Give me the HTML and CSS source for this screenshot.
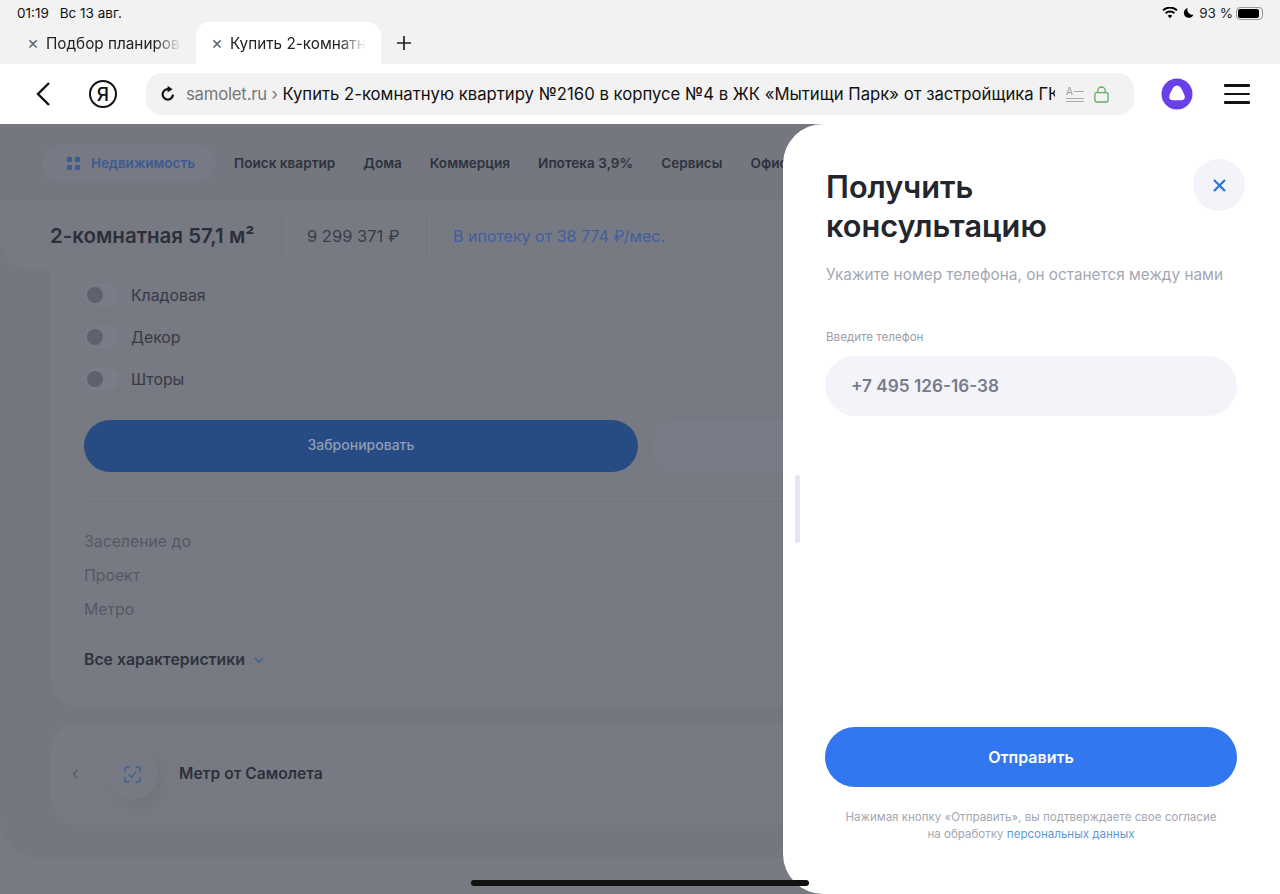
FILE: index.html
```html
<!DOCTYPE html>
<html lang="ru">
<head>
  <meta charset="UTF-8">
  <meta name="viewport" content="width=device-width, initial-scale=1.0">
  <title>Купить 2-комнатную квартиру</title>
  <link rel="stylesheet" href="styles.css">
</head>
<body>
  <div class="app">
    <div class="chrome-top">
      <div class="status-bar">
        <div class="status-time">
          <span>01:19</span>
          <span>Вс 13 авг.</span>
        </div>
        <div class="status-right">
          <svg class="status-wifi" viewBox="0 0 16 12" width="16" height="12">
            <path d="M8 11.200 10.200 8.800a3.200 3.200 0 0 0-4.400 0z" fill="#000"/>
            <path d="M3.600 6.200a6.400 6.400 0 0 1 8.800 0M1 3.400a10 10 0 0 1 14 0" fill="none" stroke="#000" stroke-width="1.900"/>
          </svg>
          <svg class="status-moon" viewBox="0 0 12 12" width="11" height="12">
            <path d="M5 .6a5.400 5.400 0 1 0 6.400 7.200A5.600 5.600 0 0 1 5 .6z" fill="#000"/>
          </svg>
          <span>93 %</span>
          <div class="battery"><div class="battery-level"></div></div>
        </div>
      </div>
      <div class="tabs">
        <div class="tab">
          <span class="tab-close">×</span>
          <span class="tab-title">Подбор планировок</span>
        </div>
        <div class="tab active">
          <span class="tab-close">×</span>
          <span class="tab-title">Купить 2-комнатную</span>
        </div>
        <div class="tab-add">
          <svg viewBox="0 0 14 14" width="14" height="14">
            <path d="M7 0v14M0 7h14" stroke="#222" stroke-width="1.700"/>
          </svg>
        </div>
      </div>
    </div>

    <div class="toolbar">
      <svg class="back-icon" viewBox="0 0 16 26" width="16" height="26">
        <path d="M14 2 3 13l11 11" fill="none" stroke="#111" stroke-width="2.400"/>
      </svg>
      <div class="ya-logo">Я</div>
      <div class="url-bar">
        <svg class="reload-icon" viewBox="0 0 18 18" width="18" height="18">
          <path d="M14 9.600A5.200 5.200 0 1 1 9.200 4.200" fill="none" stroke="#111" stroke-width="2.200"/>
          <path d="M8.600 .8l5 3.400-5 3.400z" fill="#111"/>
        </svg>
        <div class="url-text"><span class="url-host">samolet.ru ›</span> Купить 2-комнатную квартиру №2160 в корпусе №4 в ЖК «Мытищи Парк» от застройщика ГК Самолет</div>
        <div class="reader-icon">
          <span class="reader-top"><span>A</span><i></i></span>
          <i></i>
          <i></i>
        </div>
        <svg class="lock-icon" viewBox="0 0 16 18" width="15" height="17">
          <rect x="1" y="7" width="14" height="10" rx="1.500" fill="none" stroke="#62ad62" stroke-width="1.400"/>
          <path d="M4 7V5a4 4 0 0 1 8 0v2" fill="none" stroke="#62ad62" stroke-width="1.400"/>
        </svg>
      </div>
      <svg class="alice-icon" viewBox="0 0 32 32" width="32" height="32">
        <circle cx="16" cy="16" r="15.500" fill="#6a3fe8"/>
        <path d="M16 7.500c2.600 0 4 2.200 5.600 5.600 1.400 3 3 5.400 1.800 7.600-1.200 2-4.400 1.500-7.400 1.500s-6.200.5-7.400-1.500c-1.200-2.200.4-4.600 1.800-7.600C12 9.700 13.400 7.500 16 7.500z" fill="#fff"/>
      </svg>
      <div class="menu-icon"><i></i><i></i><i></i></div>
    </div>

    <div class="page">
      <div class="site">
        <div class="site-nav">
          <div class="nav-pill">
            <span class="nav-grid"><i></i><i></i><i></i><i></i></span>
            Недвижимость
          </div>
          <span class="nav-link">Поиск квартир</span>
          <span class="nav-link">Дома</span>
          <span class="nav-link">Коммерция</span>
          <span class="nav-link">Ипотека 3,9%</span>
          <span class="nav-link">Сервисы</span>
          <span class="nav-link">Офисы</span>
        </div>

        <div class="price-bar">
          <div class="price-title">2-комнатная 57,1 м²</div>
          <div class="price-value">9 299 371 ₽</div>
          <div class="price-mortgage">В ипотеку от 38 774 ₽/мес.</div>
        </div>

        <div class="card main-card">
          <div class="option"><span class="toggle"></span>Кладовая</div>
          <div class="option"><span class="toggle"></span>Декор</div>
          <div class="option"><span class="toggle"></span>Шторы</div>
          <div class="card-actions">
            <div class="book-btn">Забронировать</div>
            <div class="second-btn"></div>
          </div>
          <div class="specs">
            <div class="spec">Заселение до</div>
            <div class="spec">Проект</div>
            <div class="spec">Метро</div>
          </div>
          <div class="all-specs">
            Все характеристики
            <svg viewBox="0 0 10 6" width="10" height="6">
              <path d="M1 1l4 4 4-4" fill="none" stroke="#3d5c97" stroke-width="1.400"/>
            </svg>
          </div>
        </div>

        <div class="card promo-card">
          <svg class="promo-prev" viewBox="0 0 7 12" width="7" height="10">
            <path d="M6 1 1 6l5 5" fill="none" stroke="#565a66" stroke-width="1.500"/>
          </svg>
          <div class="promo-icon">
            <svg viewBox="0 0 18 18" width="17" height="17">
              <path d="M1 6V3a2 2 0 0 1 2-2h3M12 1h3a2 2 0 0 1 2 2v3M17 12v3a2 2 0 0 1-2 2h-3M6 17H3a2 2 0 0 1-2-2v-3" fill="none" stroke="#3f5f9c" stroke-width="1.700"/>
              <path d="M5 9l3 3 5-6" fill="none" stroke="#3f5f9c" stroke-width="1.500"/>
            </svg>
          </div>
          <div class="promo-title">Метр от Самолета</div>
        </div>
      </div>

      <div class="drawer">
        <div class="drawer-scroll"></div>
        <div class="drawer-head">
          <h1 class="drawer-title">Получить консультацию</h1>
          <div class="drawer-close">
            <svg viewBox="0 0 13 13" width="13" height="13">
              <path d="M1 1l11 11M12 1 1 12" stroke="#2f6fe0" stroke-width="2.200"/>
            </svg>
          </div>
        </div>
        <div class="drawer-sub">Укажите номер телефона, он останется между нами</div>
        <div class="field-label">Введите телефон</div>
        <div class="field-input">+7 495 126-16-38</div>
        <div class="drawer-foot">
          <div class="send-btn">Отправить</div>
          <div class="legal">
            Нажимая кнопку «Отправить», вы подтверждаете свое согласие<br>
            на обработку <span class="legal-link">персональных данных</span>
          </div>
        </div>
      </div>

      <div class="home-bar"></div>
    </div>
  </div>
</body>
</html>
```

FILE: styles.css
```css
* {
  box-sizing: border-box;
}

html, body {
  margin: 0;
  padding: 0;
  height: 100%;
}

body {
  font-family: Inter, 'Noto Sans', sans-serif;
  background: #787a82;
  overflow: hidden;
}

.app {
  display: flex;
  flex-direction: column;
  height: 894px;
}

/* browser chrome */
.chrome-top {
  height: 64px;
  background: #f2f2f2;
  flex-shrink: 0;
}

.status-bar {
  height: 22px;
  padding: 4px 17px 0 17px;
  display: flex;
  justify-content: space-between;
  align-items: center;
  font-size: 13.5px;
  color: #111;
}

.status-time {
  display: flex;
  gap: 11px;
}

.status-right {
  display: flex;
  align-items: center;
  gap: 5px;
  color: #222;
  font-size: 13.5px;
}

.battery {
  width: 27px;
  height: 13px;
  border: 1px solid #999;
  border-radius: 4px;
  padding: 1px;
  margin-left: -2px;
}

.battery-level {
  height: 100%;
  width: 93%;
  background: #000;
  border-radius: 2px;
}

.tabs {
  height: 42px;
  display: flex;
  align-items: center;
  padding-left: 12px;
}

.tab {
  width: 184px;
  height: 42px;
  display: flex;
  align-items: center;
  padding: 0 15px;
  gap: 7px;
  font-size: 15.3px;
  color: #222;
}

.tab.active {
  background: #fff;
  border-radius: 14px 14px 0 0;
  width: 185px;
}

.tab-close {
  font-size: 18px;
  color: #666;
  line-height: 1;
}

.tab-title {
  white-space: nowrap;
  overflow: hidden;
  mask-image: linear-gradient(to right, #000 80%, transparent 100%);
}

.tab-add {
  margin-left: 16px;
  display: flex;
}

.toolbar {
  height: 60px;
  background: #fff;
  flex-shrink: 0;
  display: flex;
  align-items: center;
  padding-left: 35px;
}

.ya-logo {
  width: 28px;
  height: 28px;
  margin-left: 38px;
  border: 2px solid #111;
  border-radius: 50%;
  display: flex;
  align-items: center;
  justify-content: center;
  font-size: 19px;
  font-weight: 500;
  color: #111;
}

.url-bar {
  width: 988px;
  height: 42px;
  margin-left: 29px;
  background: #f2f2f2;
  border-radius: 16px;
  display: flex;
  align-items: center;
  padding-left: 13px;
}

.url-text {
  width: 869px;
  margin-left: 9px;
  font-size: 16.7px;
  color: #111;
  white-space: nowrap;
  overflow: hidden;
}

.url-host {
  color: #777;
  letter-spacing: -0.2px;
}

.reader-icon {
  width: 18px;
  margin-left: 11px;
  display: flex;
  flex-direction: column;
  gap: 2px;
}

.reader-icon i {
  display: block;
  height: 1px;
  background: #aaa;
}

.reader-top {
  display: flex;
  align-items: center;
  gap: 1px;
  font-size: 10px;
  line-height: 9px;
  color: #999;
}

.reader-top i {
  flex: 1;
}

.lock-icon {
  margin-left: 10px;
}

.alice-icon {
  margin-left: 27px;
}

.menu-icon {
  margin-left: 31px;
  width: 26px;
  display: flex;
  flex-direction: column;
  gap: 6px;
}

.menu-icon i {
  display: block;
  height: 2.5px;
  background: #111;
  border-radius: 1px;
}

/* dimmed site */
.page {
  flex: 1;
  position: relative;
  overflow: hidden;
  background: #787a82;
}

.site {
  height: 734px;
  background: #74777f;
  border-radius: 0 0 40px 40px;
}

.site-nav {
  display: flex;
  align-items: center;
  gap: 28px;
  padding: 20px 0 0 42px;
  white-space: nowrap;
}

.nav-pill {
  height: 38px;
  width: 174px;
  margin-right: -10px;
  background: #777a84;
  border-radius: 19px;
  display: flex;
  align-items: center;
  padding-left: 25px;
  gap: 11px;
  font-size: 13.5px;
  font-weight: 600;
  color: #3c5a94;
}

.nav-grid {
  display: grid;
  grid-template-columns: 5px 5px;
  gap: 3px;
}

.nav-grid i {
  display: block;
  height: 5px;
  border-radius: 1px;
  background: #3c5a94;
}

.nav-link {
  font-size: 13.6px;
  font-weight: 600;
  color: #2f323e;
}

.price-bar {
  height: 70px;
  margin-top: 18px;
  padding: 1px 0 0 50px;
  background: #777a83;
  border-radius: 0 0 0 30px;
  display: flex;
  align-items: center;
}

.price-title {
  width: 231px;
  font-size: 20.5px;
  font-weight: 600;
  color: #2c2f3a;
  white-space: nowrap;
}

.price-value {
  width: 146px;
  height: 40px;
  line-height: 40px;
  padding-left: 25px;
  border-left: 1px solid #71747e;
  border-right: 1px solid #71747e;
  font-size: 16.5px;
  color: #3a3d49;
  white-space: nowrap;
}

.price-mortgage {
  padding-left: 26px;
  font-size: 16px;
  color: #3f5f9f;
  white-space: nowrap;
}

.card {
  margin-left: 50px;
  background: #777a83;
}

.main-card {
  height: 436px;
  padding: 4px 0 0 34px;
  border-radius: 0 0 0 28px;
}

.option {
  height: 42px;
  display: flex;
  align-items: center;
  gap: 12px;
  font-size: 15.8px;
  color: #363946;
}

.toggle {
  width: 35px;
  height: 22px;
  border-radius: 11px;
  background: #7a7d87;
  position: relative;
}

.toggle::before {
  content: '';
  position: absolute;
  left: 3px;
  top: 3px;
  width: 16px;
  height: 16px;
  border-radius: 50%;
  background: #5f616f;
}

.card-actions {
  display: flex;
  gap: 14px;
  margin-top: 20px;
}

.book-btn {
  width: 554px;
  height: 52px;
  padding-bottom: 3px;
  border-radius: 26px;
  background: #274b83;
  display: flex;
  align-items: center;
  justify-content: center;
  font-size: 14px;
  font-weight: 500;
  color: #8f9db8;
}

.second-btn {
  flex: 1;
  height: 52px;
  border-radius: 26px 0 0 26px;
  background: #797c86;
}

.specs {
  margin-top: 29px;
  padding-top: 23px;
  border-top: 1px solid #71747e;
}

.spec {
  height: 34px;
  line-height: 34px;
  font-size: 15.8px;
  color: #555863;
}

.all-specs {
  margin-top: 23px;
  display: flex;
  align-items: center;
  gap: 9px;
  font-size: 15.8px;
  font-weight: 600;
  color: #2f323e;
}

.promo-card {
  height: 102px;
  margin-top: 17px;
  border-radius: 28px 0 0 28px;
  display: flex;
  align-items: center;
  padding-left: 22px;
}

.promo-prev {
  flex-shrink: 0;
}

.promo-icon {
  width: 52px;
  height: 52px;
  margin-left: 27px;
  border-radius: 50%;
  background: #777a83;
  box-shadow: 6px 8px 12px rgba(50, 52, 62, 0.07);
  display: flex;
  align-items: center;
  justify-content: center;
}

.promo-title {
  margin-left: 21px;
  padding-bottom: 2px;
  font-size: 15.6px;
  font-weight: 600;
  color: #2c2f3a;
}

/* consultation drawer */
.drawer {
  position: absolute;
  top: 0;
  right: 0;
  bottom: 0;
  width: 497px;
  background: #fff;
  border-radius: 40px 0 0 40px;
  padding: 43px 43px 0 42px;
  display: flex;
  flex-direction: column;
}

.drawer-scroll {
  position: absolute;
  left: 12px;
  top: 351px;
  width: 5px;
  height: 68px;
  border-radius: 3px;
  background: #e4e7f2;
}

.drawer-head {
  display: flex;
  justify-content: space-between;
  align-items: flex-start;
  margin-right: -8px;
  padding-left: 1px;
}

.drawer-title {
  margin: 0;
  width: 260px;
  font-size: 30.7px;
  line-height: 39px;
  font-weight: 600;
  color: #24262e;
}

.drawer-close {
  width: 52px;
  height: 52px;
  margin-top: -8px;
  border-radius: 50%;
  background: #f2f4fa;
  display: flex;
  align-items: center;
  justify-content: center;
}

.drawer-sub {
  margin-top: 18px;
  padding-left: 1px;
  font-size: 15.35px;
  line-height: 24px;
  color: #a3a7b3;
  white-space: nowrap;
}

.field-label {
  margin-top: 42px;
  padding-left: 1px;
  font-size: 11.6px;
  line-height: 16px;
  color: #9a9eaa;
}

.field-input {
  margin-top: 11px;
  height: 60px;
  padding: 0 0 2px 26px;
  border-radius: 30px;
  background: #f3f4fa;
  display: flex;
  align-items: center;
  font-size: 17.2px;
  font-weight: 600;
  color: #777b8b;
}

.drawer-foot {
  margin-top: auto;
  padding-bottom: 51px;
}

.send-btn {
  height: 60px;
  padding-bottom: 1px;
  border-radius: 30px;
  background: #3276f0;
  display: flex;
  align-items: center;
  justify-content: center;
  font-size: 16px;
  font-weight: 600;
  color: #fff;
}

.legal {
  margin-top: 22px;
  font-size: 11.55px;
  line-height: 17px;
  color: #a3a7b3;
  text-align: center;
  white-space: nowrap;
}

.legal-link {
  color: #5b9bd6;
}

.home-bar {
  position: absolute;
  left: 471px;
  top: 756px;
  width: 338px;
  height: 6px;
  border-radius: 3px;
  background: #111;
}
```
